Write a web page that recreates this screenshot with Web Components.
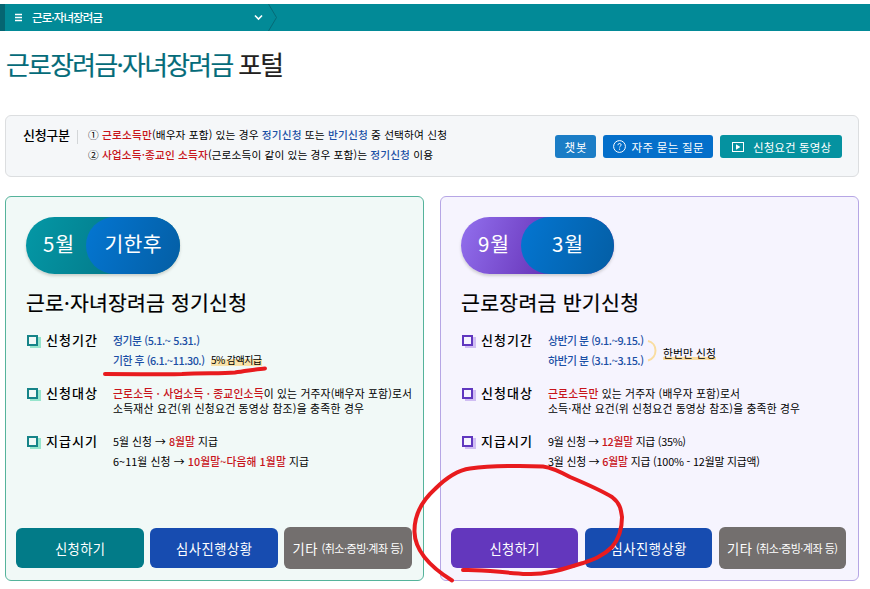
<!DOCTYPE html>
<html lang="ko">
<head>
<meta charset="utf-8">
<title>근로장려금·자녀장려금 포털</title>
<style>
html, body { margin: 0; padding: 0; background: #fff; }
body { width: 870px; height: 589px; overflow: hidden; font-family: "Noto Sans CJK KR", sans-serif; color: #000; }
</style>
</head>
<body>
<portal-page></portal-page>
<script>
const define = (name, html, after) => {
  const tpl = document.createElement('template');
  tpl.innerHTML = html;
  customElements.define(name, class extends HTMLElement {
    connectedCallback() {
      if (!this.shadowRoot) this.attachShadow({ mode: 'open' }).append(tpl.content.cloneNode(true));
      if (after) after.call(this);
    }
  });
};

/* One line of text, tracked so that it spans the given width */
define('text-line', `<style>
:host { display: inline-flex; line-height: inherit; flex: none; }
span { display: block; white-space: pre; }
::slotted(.r) { color: #c8141b; font-weight: 500; }
::slotted(.b) { color: #1b4fa5; font-weight: 500; }
::slotted(.k) { color: #231f20; }
</style><span><slot></slot></span>`, function () {
  const w = parseFloat(this.getAttribute('w'));
  const span = this.shadowRoot.querySelector('span');
  const gap = (w - span.getBoundingClientRect().width) / (this.textContent.length - 1);
  span.style.letterSpacing = gap + 'px';
  span.style.marginRight = -gap + 'px';
});

define('menu-bar', `
<style>
:host { display: flex; align-items: center; box-sizing: border-box; height: 27px; background: #028a97; border-left: 5px solid #056572; color: #fff; font-size: 11.5px; font-weight: 500; line-height: 27px; }
.menu { margin: 0 9px 0 9px; }
.crumb { display: flex; width: 222px; height: 27px; }
.end { margin-left: 4px; }
svg { display: block; flex: none; }
</style>
<svg class="menu" width="9" height="9"><path d="M1 1.500h7M1 4.500h7M1 7.500h7" stroke="#fff" stroke-width="1.400"/></svg>
<div class="crumb"><text-line w="71">근로·자녀장려금</text-line></div>
<svg width="9" height="7" fill="none"><path d="M1 1.500l3.500 3.500L8 1.500" stroke="#fff" stroke-width="1.6"/></svg>
<svg class="end" width="12" height="27" fill="none"><path d="M1.500 0l8 13.500-8 13.500" stroke="#056a76"/></svg>`);

define('pill-button', `
<style>
:host { display: flex; align-items: center; justify-content: center; box-sizing: border-box; height: 23px; border-radius: 3px; color: #fff; font-size: 11.5px; line-height: 22px; background: var(--bg); flex: none; }
</style><slot></slot>`);

define('notice-box', `
<style>
:host { display: flex; box-sizing: border-box; height: 62px; border: 1px solid #dcdee0; border-radius: 6px; background: #f5f7f9; padding: 9px 16px 0 17px; }
.name { font-size: 13px; font-weight: 500; line-height: 20px; width: 54px; }
.bar { width: 1px; height: 14px; margin: 5px 10px 0 0; background: #d3d6d8; }
.lines { display: flex; flex-direction: column; align-items: flex-start; font-size: 10.7px; line-height: 20px; flex: 1; }
.buttons { display: flex; padding-top: 10px; }
</style>
<div class="name"><text-line w="47">신청구분</text-line></div><div class="bar"></div>
<div class="lines">
<text-line w="359">① <span class="r">근로소득만</span>(배우자 포함) 있는 경우 <span class="b">정기신청</span> 또는 <span class="b">반기신청</span> 중 선택하여 신청</text-line>
<text-line w="345">② <span class="r">사업소득·종교인 소득자</span>(근로소득이 같이 있는 경우 포함)는 <span class="b">정기신청</span> 이용</text-line>
</div>
<div class="buttons">
<pill-button style="width:41px;margin-right:7px;--bg:#1b7dc6"><text-line w="22">챗봇</text-line></pill-button>
<pill-button style="width:110px;margin-right:7px;--bg:#046fca"><svg width="13" height="13" viewBox="0 0 13 13" fill="none" stroke="#fff" style="margin-right:6px"><circle cx="6.5" cy="6.5" r="5.9"/><path d="M4.900 5.200c0-2.300 3.300-2.200 3.200-.2 0 1.100-1.500 1.100-1.500 2.400M6.600 8.600v1.200"/></svg><text-line w="72">자주 묻는 질문</text-line></pill-button>
<pill-button style="width:122px;--bg:#0592a0"><svg width="12" height="10" viewBox="0 0 12 10" style="margin:0 9px 0 1px"><rect x=".5" y=".5" width="11" height="9" fill="none" stroke="#fff"/><path d="M4 2.300l4.400 2.700L4 7.700z" fill="#fff"/></svg><text-line w="78">신청요건 동영상</text-line></pill-button>
</div>`);

define('month-badge', `
<style>
:host { display: flex; width: var(--w); height: 57px; border-radius: 29px; background: linear-gradient(110deg, var(--from), var(--to) 60%); color: #fff; font-size: 20.5px; line-height: 53px; box-shadow: 0 2px 3px rgba(70,70,50,.22); }
.one, .two { display: flex; }
.one { width: 60px; box-sizing: border-box; padding-left: 17px; }
.two { flex: 1; border-radius: 29px; background: linear-gradient(110deg, #0476d2, #045ea4); justify-content: center; }
</style><div class="one"><slot name="one"></slot></div><div class="two"><slot name="two"></slot></div>`);

define('info-row', `
<style>
:host { display: flex; line-height: 20px; font-size: 10.8px; }
.mark { width: 11px; height: 11px; margin: 5px 8px 0 2px; box-shadow: 3px 2px 0 var(--soft); box-sizing: border-box; border: 2px solid var(--strong); background: var(--paper); flex: none; }
.name { display: flex; height: 20px; width: 66px; font-size: 13px; font-weight: 500; flex: none; }
.lines { display: flex; flex-direction: column; align-items: flex-start; line-height: var(--lh, 20px); margin-top: var(--mt, 0); }
</style><div class="mark"></div><div class="name"><slot name="name"></slot></div><div class="lines"><slot></slot></div>`);

define('action-button', `
<style>
:host { display: flex; align-items: center; justify-content: center; box-sizing: border-box; height: 40px; flex: 1; border-radius: 6px; background: var(--bg); color: #fff; font-size: 13.3px; line-height: 39px; }
:host([tall]) { height: 42px; }
</style><slot></slot>`);

define('apply-card', `
<style>
:host { display: flex; flex-direction: column; box-sizing: border-box; width: 419px; height: 385px; border: 1px solid var(--line); border-radius: 6px; background: var(--paper); padding: 20px 11px 11px 10px; }
.top { padding-left: 10px; }
.title { display: flex; height: 40px; line-height: 40px; margin-top: 8px; font-size: 20.5px; -webkit-text-stroke: .2px currentColor; }
.rows { padding-left: 9px; margin-top: 8px; height: 195px; }
.actions { display: flex; align-items: center; gap: var(--gap); height: 42px; margin-top: auto; }
</style>
<div class="top"><slot name="badge"></slot><div class="title"><slot name="title"></slot></div></div>
<div class="rows"><slot></slot></div>
<div class="actions"><slot name="action"></slot></div>`);

define('pen-marks', `
<style>:host { position: absolute; left: 0; top: 0; pointer-events: none; } svg { display: block; }</style>
<svg width="870" height="589" fill="none" stroke="#e81b1e" stroke-width="4" stroke-linecap="round" stroke-linejoin="round">
<path d="M105 374C140 374 169 374.500 182 374C202 372.500 220 374 235 372.500C247 371 257 369 265 368.500"/>
<path d="M452 580.500C432 568 415 551 414.500 532C414 512 424 499 435 489C447 477 459 470 470 468.500C492 465.500 525 465.500 543 466.500C551 467.500 558 470.500 570 477C589 485 602 491 612 497C621 504 621 511 622 517C622 529 618 540 612 547C602 557 592 560 583 563C566 568 548 575 527 574C503 573 483 569 463 570"/>
</svg>`);

define('portal-page', `
<style>
:host { display: block; position: relative; width: 870px; height: 589px; padding-top: 4px; box-sizing: border-box; }
h1 { display: flex; margin: 0 0 0 6px; height: 84px; line-height: 66px; font-size: 25.8px; font-weight: 400; color: #046b79; }
notice-box { margin: 0 11px 0 5px; }
.cards { display: flex; gap: 16px; padding: 19px 0 0 5px; }
.teal { --line: #55b39b; --paper: #f1f9f7; --strong: #168488; --soft: #96e5cc; --gap: 6px; }
.violet { --line: #b6a6e5; --paper: #f6f4fe; --strong: #6037bf; --soft: #d0bdf3; --gap: 7px; }
.violet action-button { flex: none; width: 127px; }
info-row { padding-right: 0; }
.hl { background: linear-gradient(transparent 45%, #f9e3a9 45%, #f9e3a9 88%, transparent 88%); line-height: 16px; }
.under { background: linear-gradient(transparent 12px, #f9dda0 12px, #f9dda0 15px, transparent 15px); line-height: 16px; margin-top: 5px; }
.once { display: flex; align-items: center; height: 40px; }
.once .two { display: flex; flex-direction: column; }
.period { display: flex; align-items: center; gap: 6px; height: 20px; }
</style>
<menu-bar></menu-bar>
<h1><text-line w="278" style="-webkit-text-stroke:.2px currentColor">근로장려금·자녀장려금 <span class="k">포털</span></text-line></h1>
<notice-box></notice-box>
<div class="cards">
<apply-card class="teal">
<month-badge slot="badge" style="--w:154px;--from:#0498a6;--to:#047c8c"><text-line slot="one" w="31">5월</text-line><text-line slot="two" w="57">기한후</text-line></month-badge>
<text-line slot="title" w="221">근로·자녀장려금 정기신청</text-line>
<info-row style="height:53px"><text-line slot="name" w="51">신청기간</text-line>
<text-line w="87" style="margin-left:1px"><span class="b">정기분 (5.1.~ 5.31.)</span></text-line>
<div class="period" style="margin-left:1px"><text-line w="92"><span class="b">기한 후 (6.1.~11.30.)</span></text-line><text-line class="hl" style="font-size:10px" w="51">5% 감액지급</text-line></div></info-row>
<info-row style="height:48px;--lh:15px;--mt:3px"><text-line slot="name" w="51">신청대상</text-line>
<text-line w="299" style="margin-left:1px"><span class="r">근로소득 · 사업소득 · 종교인소득</span>이 있는 거주자(배우자 포함)로서</text-line>
<text-line w="251" style="margin-left:1px">소득재산 요건(위 신청요건 동영상 참조)을 충족한 경우</text-line></info-row>
<info-row><text-line slot="name" w="51">지급시기</text-line>
<text-line w="105" style="margin-left:1px">5월 신청 → <span class="r">8월말</span> 지급</text-line>
<text-line w="196" style="margin-left:1px">6~11월 신청 → <span class="r">10월말~다음해 1월말</span> 지급</text-line></info-row>
<action-button slot="action" style="--bg:#027b88"><text-line w="50">신청하기</text-line></action-button>
<action-button slot="action" style="--bg:#174cb0"><text-line w="76">심사진행상황</text-line></action-button>
<action-button slot="action" tall style="--bg:#736f6e"><text-line w="25" style="margin-right:4px">기타</text-line><text-line w="82" style="font-size:11px">(취소·증빙·계좌 등)</text-line></action-button>
</apply-card>
<apply-card class="violet">
<month-badge slot="badge" style="--w:153px;--from:#9270ee;--to:#6835b9"><text-line slot="one" w="31">9월</text-line><text-line slot="two" w="31">3월</text-line></month-badge>
<text-line slot="title" w="178">근로장려금 반기신청</text-line>
<info-row style="height:53px"><text-line slot="name" w="51">신청기간</text-line>
<div class="once" style="margin-left:1px"><div class="two"><text-line w="96"><span class="b">상반기 분 (9.1.~9.15.)</span></text-line><text-line w="96"><span class="b">하반기 분 (3.1.~3.15.)</span></text-line></div>
<svg width="10" height="22" fill="none" style="margin:2px 6px 0 3px"><path d="M1 1C11 3 11 18 1 20.500" stroke="#f9dda0" stroke-width="2"/></svg><text-line class="under" w="53">한번만 신청</text-line></div></info-row>
<info-row style="height:48px;--lh:15px;--mt:3px"><text-line slot="name" w="51">신청대상</text-line>
<text-line w="192" style="margin-left:1px"><span class="r">근로소득만</span> 있는 거주자 (배우자 포함)로서</text-line>
<text-line w="252" style="margin-left:1px">소득·재산 요건(위 신청요건 동영상 참조)을 충족한 경우</text-line></info-row>
<info-row><text-line slot="name" w="51">지급시기</text-line>
<text-line w="138" style="margin-left:1px">9월 신청 → <span class="r">12월말</span> 지급 (35%)</text-line>
<text-line w="212" style="margin-left:1px">3월 신청 → <span class="r">6월말</span> 지급 (100% - 12월말 지급액)</text-line></info-row>
<action-button slot="action" style="--bg:#6337bd"><text-line w="50">신청하기</text-line></action-button>
<action-button slot="action" style="--bg:#174cb0"><text-line w="76">심사진행상황</text-line></action-button>
<action-button slot="action" tall style="--bg:#736f6e"><text-line w="25" style="margin-right:4px">기타</text-line><text-line w="82" style="font-size:11px">(취소·증빙·계좌 등)</text-line></action-button>
</apply-card>
</div>
<pen-marks></pen-marks>`);
</script>
</body>
</html>
